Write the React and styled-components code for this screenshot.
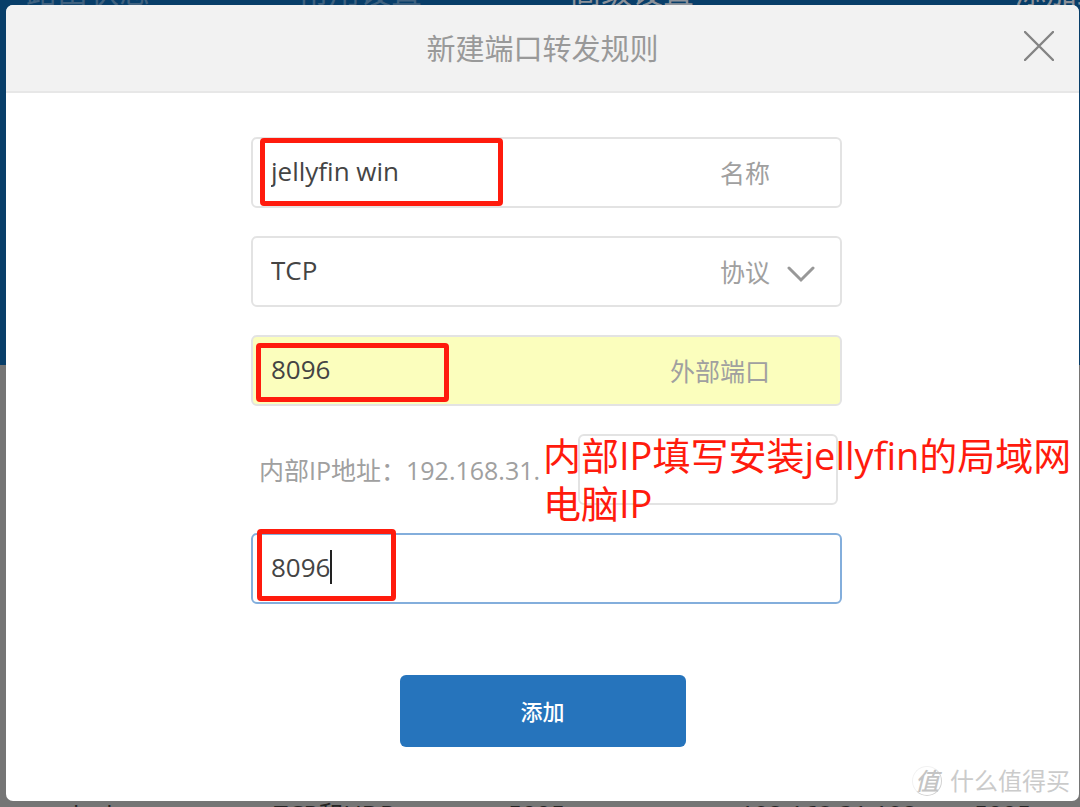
import React from "react";
import styled, { createGlobalStyle } from "styled-components";

const GlobalStyle = createGlobalStyle`
  * {
    box-sizing: border-box;
  }
  body {
    margin: 0;
    overflow: hidden;
    font-family: "Open Sans", "Noto Sans CJK SC", sans-serif;
  }
  input, select, button {
    font-family: inherit;
  }
`;

const Page = styled.div`
  display: grid;
  grid-template-columns: 100%;
  height: 100vh;
`;

const Backdrop = styled.div`
  grid-area: 1 / 1;
  display: flex;
  flex-direction: column;
  min-height: 0;
  background: #757575;
`;

const Banner = styled.div`
  height: 365px;
  background: #083e69;
`;

const Tabs = styled.nav`
  display: grid;
  grid-template-columns: 272px 272px 1fr 65px;
  align-content: end;
  height: 6px;
  padding-left: 26px;
  overflow: hidden;
`;

const Tab = styled.a`
  color: ${(props) => (props.$active ? "#8b9199" : "#3f617f")};
  font-size: 31px;
  line-height: 30px;
  text-decoration: none;
  white-space: nowrap;
`;

const Rules = styled.div`
  display: grid;
  grid-template-columns: 210px 234px 232px 234px 1fr;
  height: 6px;
  margin-top: auto;
  padding-left: 64px;
  overflow: hidden;
  color: #242424;
  font-size: 25px;
  line-height: 26px;
  white-space: nowrap;
`;

const Modal = styled.section`
  grid-area: 1 / 1;
  display: flex;
  flex-direction: column;
  margin: 5px 1px 6px 6px;
  overflow: hidden;
  border-radius: 7px;
  background: #fff;
`;

const Header = styled.header`
  display: grid;
  grid-template-columns: 80px 1fr 80px;
  align-items: center;
  height: 88px;
  border-bottom: 2px solid #e7e7e7;
  background: #f2f2f2;
`;

const Title = styled.h1`
  grid-column: 2;
  margin: 0;
  padding-top: 2px;
  color: #999;
  font-size: 29px;
  font-weight: 400;
  line-height: 40px;
  text-align: center;
`;

const Close = styled.button`
  display: flex;
  justify-content: center;
  padding: 0 0 4px;
  border: 0;
  background: none;
  cursor: pointer;
`;

const Form = styled.form`
  display: flex;
  flex-direction: column;
  align-items: center;
  padding: 44px 0 0;
`;

const Fields = styled.div`
  display: flex;
  flex-direction: column;
  gap: 28px;
  width: 591px;
  max-width: 100%;
  margin-left: 8px;
`;

const Field = styled.div`
  position: relative;
  display: flex;
  align-items: center;
  height: 71px;
  border: 2px solid ${(props) => (props.$focused ? "#83aedc" : "#e3e3e3")};
  border-radius: 6px;
  background: ${(props) => (props.$filled ? "#fbfebd" : "#fff")};
`;

const Input = styled.input`
  flex: 1;
  min-width: 0;
  height: 100%;
  padding: 0 18px 3px;
  border: 0;
  outline: 0;
  background: none;
  color: #444;
  font-size: 26px;
`;

const Select = styled.select`
  flex: 1;
  min-width: 0;
  height: 100%;
  padding: 0 18px 3px;
  border: 0;
  outline: 0;
  appearance: none;
  background: none;
  color: #444;
  font-size: 26px;
`;

const Label = styled.label`
  color: #a0a0a0;
  font-size: 25px;
  line-height: 36px;
`;

const Tail = styled.span`
  display: flex;
  width: 70px;
  padding: 6px 0 0 17px;
`;

const AddressRow = styled.div`
  position: relative;
  display: flex;
  align-items: center;
  justify-content: space-between;
  padding: 0 4px 0 8px;
`;

const AddressInput = styled.input`
  width: 260px;
  height: 71px;
  padding: 0 18px;
  border: 2px solid #e3e3e3;
  border-radius: 6px;
  outline: 0;
  background: #fff;
  color: #444;
  font-size: 26px;
`;

const Mark = styled.span`
  position: absolute;
  top: ${(props) => props.$top}px;
  left: ${(props) => props.$left}px;
  width: ${(props) => props.$width}px;
  height: ${(props) => props.$height}px;
  border: 5px solid #ff1b0d;
  border-radius: 4px;
  pointer-events: none;
`;

const Caret = styled.span`
  position: absolute;
  top: 15px;
  left: 77px;
  width: 2px;
  height: 34px;
  background: #222;
`;

const Note = styled.p`
  position: absolute;
  top: -3px;
  left: 292px;
  margin: 0;
  color: #ff1b0d;
  font-size: 38px;
  line-height: 48px;
  white-space: nowrap;
  pointer-events: none;
`;

const Submit = styled.button`
  width: 286px;
  height: 72px;
  margin-top: 71px;
  padding-bottom: 4px;
  border: 0;
  border-radius: 6px;
  background: #2674bc;
  color: #fff;
  font-size: 22px;
  font-weight: 500;
  cursor: pointer;
`;

const Watermark = styled.footer`
  display: flex;
  align-items: center;
  justify-content: flex-end;
  gap: 8px;
  margin-top: auto;
  padding: 0 9px 4px;
  color: #cbcbcb;
  font-size: 24px;
  line-height: 32px;
`;

const Badge = styled.span`
  display: flex;
  align-items: center;
  justify-content: center;
  width: 30px;
  height: 30px;
  border: 1px solid #d2d2d2;
  border-top-color: #f2f2f2;
  border-left-color: #f2f2f2;
  border-radius: 50%;
  color: #c4c4c4;
  font-size: 24px;
  font-style: italic;
  font-weight: 500;
`;

const App = () => (
  <>
    <GlobalStyle />
    <Page>
      <Backdrop>
        <Banner>
          <Tabs>
            <Tab href="#status">路由状态</Tab>
            <Tab href="#common">常用设置</Tab>
            <Tab href="#advanced" $active>
              高级设置
            </Tab>
            <Tab href="#more" $active>
              添加细
            </Tab>
          </Tabs>
        </Banner>
        <Rules>
          <span>docker</span>
          <span>TCP和UDP</span>
          <span>5005</span>
          <span>192.168.31.192</span>
          <span>5005</span>
        </Rules>
      </Backdrop>

      <Modal role="dialog" aria-labelledby="title">
        <Header>
          <Title id="title">新建端口转发规则</Title>
          <Close type="button" aria-label="关闭">
            <svg width="30" height="30" viewBox="0 0 30 30">
              <path
                d="M1 1L29 29M29 1L1 29"
                stroke="#848484"
                strokeWidth="2.4"
                strokeLinecap="round"
              />
            </svg>
          </Close>
        </Header>

        <Form onSubmit={(e) => e.preventDefault()}>
          <Fields>
            <Field>
              <Input id="name" defaultValue="jellyfin win" />
              <Label htmlFor="name">名称</Label>
              <Tail />
              <Mark $top={-1} $left={7} $width={243} $height={68} />
            </Field>

            <Field>
              <Select id="protocol" defaultValue="TCP">
                <option>TCP</option>
                <option>UDP</option>
              </Select>
              <Label htmlFor="protocol">协议</Label>
              <Tail>
                <svg width="28" height="17" viewBox="0 0 28 17" fill="none">
                  <path
                    d="M2 2L14 14L26 2"
                    stroke="#989898"
                    strokeWidth="3"
                    strokeLinecap="round"
                  />
                </svg>
              </Tail>
            </Field>

            <Field $filled>
              <Input id="external" defaultValue="8096" />
              <Label htmlFor="external">外部端口</Label>
              <Tail />
              <Mark $top={6} $left={3} $width={193} $height={59} />
            </Field>

            <AddressRow>
              <Label htmlFor="address">内部IP地址：192.168.31.</Label>
              <AddressInput id="address" />
              <Note>
                内部IP填写安装jellyfin的局域网
                <br />
                电脑IP
              </Note>
            </AddressRow>

            <Field $focused>
              <Input aria-label="内部端口" defaultValue="8096" />
              <Caret />
              <Mark $top={-6} $left={4} $width={139} $height={72} />
            </Field>
          </Fields>

          <Submit type="submit">添加</Submit>
        </Form>

        <Watermark>
          <Badge>值</Badge>
          <span>什么值得买</span>
        </Watermark>
      </Modal>
    </Page>
  </>
);

export default App;
